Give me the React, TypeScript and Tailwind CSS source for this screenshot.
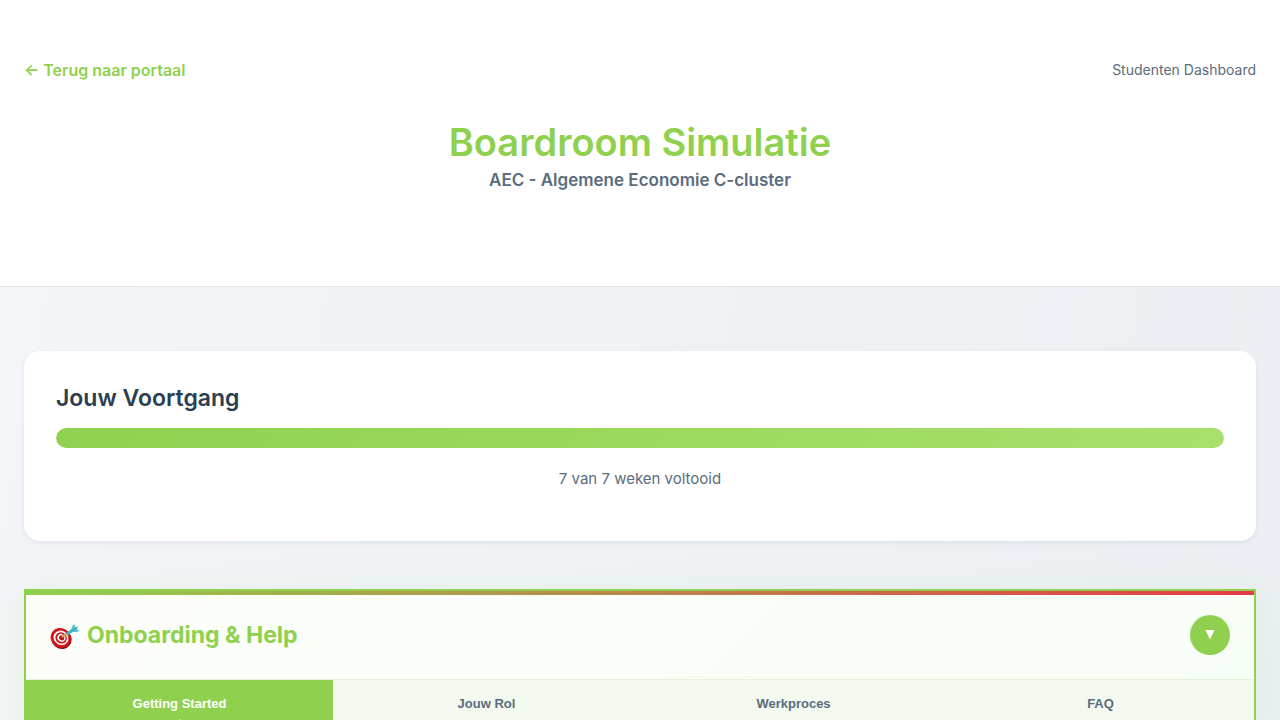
import { useState } from 'react';

const tabs = ['Getting Started', 'Jouw Rol', 'Werkproces', 'FAQ'];
const completedWeeks = 7;
const totalWeeks = 7;

function Header() {
  return (
    <header className="border-b border-[#e2e6ea] bg-white px-6 pt-14 pb-[94px]">
      <nav className="flex h-7 items-center justify-between">
        <a href="#portaal" className="text-base font-semibold text-[#8fd14f]">
          ← Terug naar portaal
        </a>
        <span className="text-sm text-[#5a6c7d]">Studenten Dashboard</span>
      </nav>
      <div className="mt-8 text-center">
        <h1 className="text-[38px] leading-[52px] font-semibold text-[#8fd14f]">Boardroom Simulatie</h1>
        <p className="text-[17px] leading-6 font-semibold text-[#5a6c7d]">AEC - Algemene Economie C-cluster</p>
      </div>
    </header>
  );
}

function Progress() {
  const percent = (completedWeeks / totalWeeks) * 100;
  return (
    <section className="rounded-2xl bg-white px-8 pt-8 pb-[50px] shadow-[0_2px_4px_rgba(44,62,80,0.08)]">
      <h2 className="text-[23px] leading-[30px] font-semibold text-[#2c3e50]">Jouw Voortgang</h2>
      <div
        role="progressbar"
        aria-label="Jouw Voortgang"
        aria-valuenow={completedWeeks}
        aria-valuemin={0}
        aria-valuemax={totalWeeks}
        className="mt-[15px] h-5 overflow-hidden rounded-full bg-[#e9ecef]"
      >
        <div
          className="h-full rounded-full bg-[linear-gradient(135deg,#8fd14f,#a8e06c)]"
          style={{ width: `${percent}%` }}
        />
      </div>
      <p className="mt-[18px] text-center text-[15px] leading-[25px] text-[#5a6c7d]">
        {completedWeeks} van {totalWeeks} weken voltooid
      </p>
    </section>
  );
}

function DartIcon() {
  return (
    <svg aria-hidden="true" viewBox="0 0 30 26" className="mt-1 h-[26px] w-[30px]">
      <g transform="rotate(35 10.5 14)">
        <ellipse cx="11.9" cy="14.3" rx="10.3" ry="9.8" fill="#8f1016" />
        <ellipse cx="10.6" cy="13.8" rx="10.4" ry="9.6" fill="#d3151d" />
        <ellipse cx="10.8" cy="13.6" rx="7.7" ry="7" fill="#fff" />
        <ellipse cx="11" cy="13.6" rx="6" ry="5.4" fill="#cf1a22" />
        <ellipse cx="11.2" cy="13.4" rx="4.2" ry="3.7" fill="#fff" />
        <ellipse cx="11.4" cy="13.2" rx="2.7" ry="2.4" fill="#b5141b" />
      </g>
      <path d="M12.5 12.8 L17 9.5" stroke="#d9a52c" strokeWidth="1.8" strokeLinecap="round" />
      <path d="M15.8 9.6 L21.5 4.8 L23.6 7.2 L17.8 11.6 Z" fill="#45b5c3" />
      <path d="M21 5.8 L22.5 1.8 L24.8 0.2 L25.3 3.6 L28.2 2.6 L26.4 5.2 L29.8 6.2 L27.2 8 L23.2 8 Z" fill="#52c2d0" />
      <path d="M22 6.6 L27.5 3.4" stroke="#247f8e" strokeWidth="0.8" />
    </svg>
  );
}

function Onboarding() {
  const [active, setActive] = useState(0);
  return (
    <section className="relative border-2 border-[#8fd14f] bg-[linear-gradient(135deg,#fcfdf8,#f7fdf7)] shadow-[0_8px_32px_rgba(143,209,79,0.15)]">
      <div className="h-1 bg-[linear-gradient(90deg,#8fd14f,#e63946)]" />
      <div className="flex items-center justify-between border-b border-[#e6f2da] px-6 pt-5 pb-6">
        <h2 className="flex items-center gap-[7px] text-[23px] leading-10 font-bold text-[#8fd14f]">
          <DartIcon />
          Onboarding &amp; Help
        </h2>
        <button
          type="button"
          aria-label="Onboarding in- of uitklappen"
          className="flex size-10 items-center justify-center rounded-full bg-[#8fd14f] text-white"
        >
          <svg aria-hidden="true" viewBox="0 0 10 10" className="size-2.5 fill-current">
            <path d="M0.5 0h9L5 9.5z" />
          </svg>
        </button>
      </div>
      <div role="tablist" className="grid grid-cols-4 bg-[#f3f9ee] font-['Liberation_Sans',Arial,sans-serif]">
        {tabs.map((tab, index) => (
          <button
            key={tab}
            type="button"
            role="tab"
            aria-selected={active === index}
            onClick={() => setActive(index)}
            className={
              active === index
                ? 'relative h-[47px] bg-[#8fd14f] text-[13px] font-bold text-white'
                : 'relative h-[47px] text-[13px] font-bold text-[#5a6c7d]'
            }
          >
            {tab}
            {active === index && (
              <span className="absolute bottom-0 left-1/2 -translate-x-1/2 border-x-8 border-b-8 border-x-transparent border-b-[#fbfdf8]" />
            )}
          </button>
        ))}
      </div>
    </section>
  );
}

export default function App() {
  return (
    <div className="min-h-screen bg-[linear-gradient(100deg,#f3f5f8,#eff3f6_35%,#ebeff3)] font-[Inter,'Liberation_Sans',sans-serif]">
      <Header />
      <main className="flex flex-col gap-12 px-6 pt-16">
        <Progress />
        <Onboarding />
      </main>
    </div>
  );
}
